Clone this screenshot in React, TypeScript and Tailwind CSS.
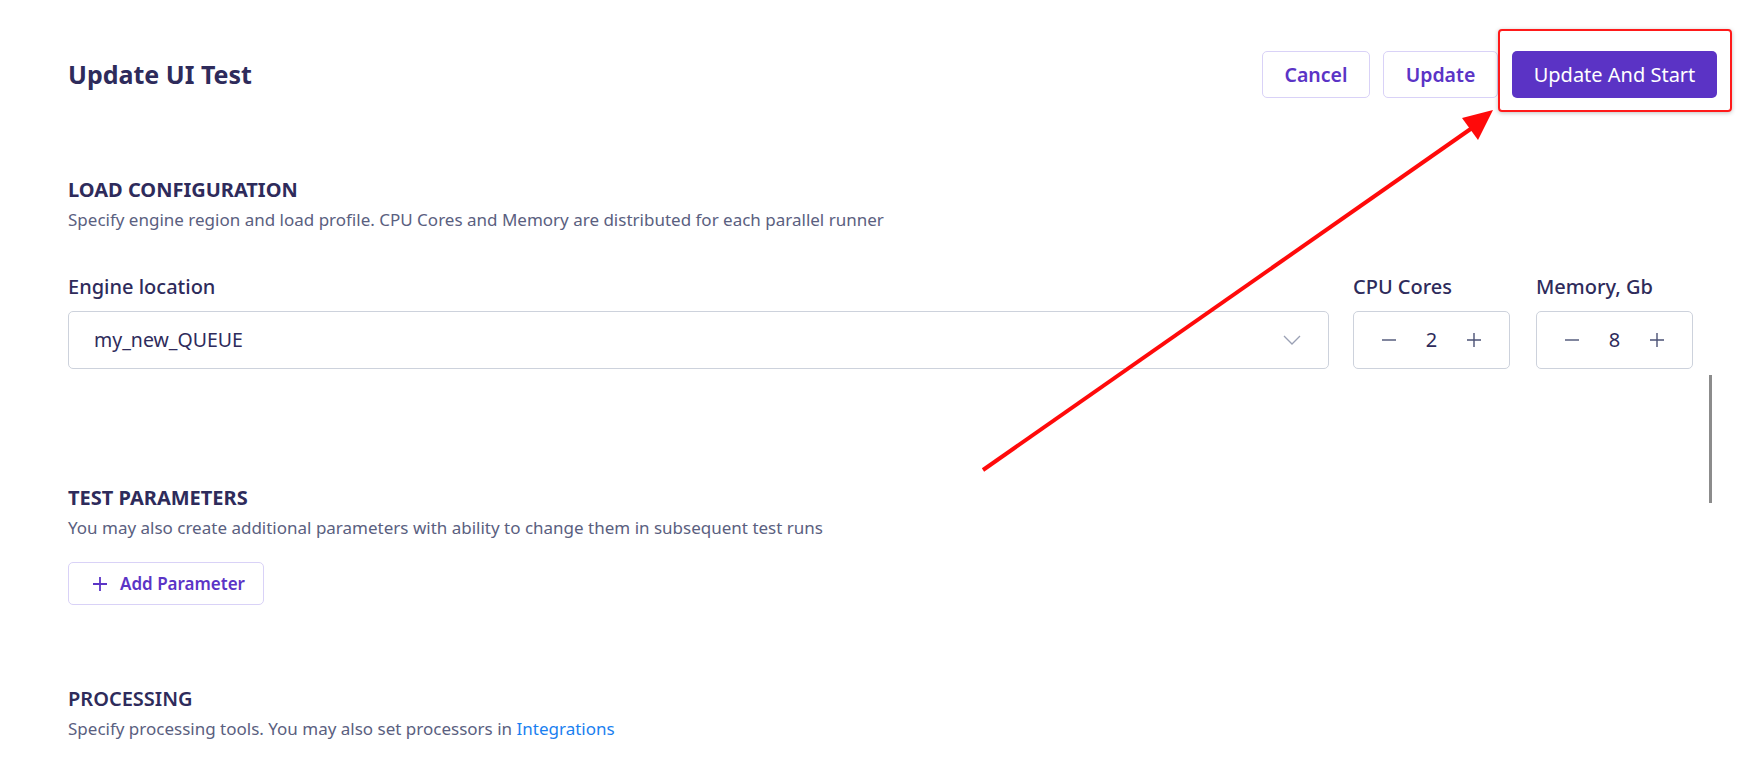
import React from 'react';

const font = { fontFamily: '"Noto Sans", "Open Sans", sans-serif' };

function Stepper({ label, value }: { label: string; value: number }) {
  return (
    <div className="flex flex-col w-[157px]">
      <span className="text-[20px] leading-[24px] font-medium text-[#2e2b5b]">{label}</span>
      <div className="mt-[12px] h-[58px] rounded-[5px] border border-[#cdd2dc] flex items-center justify-between px-[27px] text-[#4b5275]">
        <svg width="16" height="16" viewBox="0 0 16 16" fill="none" stroke="currentColor" strokeWidth="1.4">
          <path d="M1 8h14" />
        </svg>
        <span className="text-[20px] text-[#2e2b5b]">{value}</span>
        <svg width="16" height="16" viewBox="0 0 16 16" fill="none" stroke="currentColor" strokeWidth="1.4">
          <path d="M1 8h14M8 1v14" />
        </svg>
      </div>
    </div>
  );
}

function SectionHead({ title, children, bold = true }: { title: string; children: React.ReactNode; bold?: boolean }) {
  return (
    <div>
      <h2 className={`text-[20px] leading-[24px] text-[#2e2b5b] ${bold ? 'font-bold' : 'font-semibold'}`}>{title}</h2>
      <p className="mt-[7px] text-[17px] leading-[22px] text-[#5a6080]">{children}</p>
    </div>
  );
}

export default function App() {
  return (
    <div className="relative w-[1746px] h-[762px] overflow-hidden bg-white" style={font}>
      {/* header */}
      <header className="flex items-center justify-between pl-[68px] pr-[29px] pt-[51px]">
        <h1 className="text-[25px] font-bold text-[#2e2b5b]">Update UI Test</h1>
        <div className="flex items-center gap-[13px]">
          <button className="h-[47px] w-[108px] rounded-[5px] border border-[#d9d2f7] text-[19.5px] font-semibold text-[#5b34c6]">
            Cancel
          </button>
          <button className="h-[47px] w-[115px] rounded-[5px] border border-[#d9d2f7] text-[19.5px] font-semibold text-[#5b34c6]">
            Update
          </button>
          <button className="ml-[1px] h-[47px] w-[205px] rounded-[5px] bg-[#5b33c5] text-[20px] text-white">
            Update And Start
          </button>
        </div>
      </header>

      {/* content */}
      <main className="pl-[68px] pr-[53px]">
        <section className="mt-[80px]">
          <SectionHead title="LOAD CONFIGURATION">
            Specify engine region and load profile. CPU Cores and Memory are distributed for each parallel runner
          </SectionHead>
          <div className="mt-[44px] flex items-end gap-[24px]">
            <div className="flex-1 flex flex-col">
              <span className="text-[20px] leading-[24px] font-medium text-[#2e2b5b]">Engine location</span>
              <div className="mt-[12px] h-[58px] rounded-[5px] border border-[#cdd2dc] flex items-center justify-between pl-[25px] pr-[27px]">
                <span className="text-[19.5px] text-[#2e2b5b]">my_new_QUEUE</span>
                <svg width="18" height="10" viewBox="0 0 18 10" fill="none" stroke="#9aa0b4" strokeWidth="1.3">
                  <path d="M1 1l8 8 8-8" />
                </svg>
              </div>
            </div>
            <div className="flex gap-[26px]">
              <Stepper label="CPU Cores" value={2} />
              <Stepper label="Memory, Gb" value={8} />
            </div>
          </div>
        </section>

        <section className="mt-[117px]">
          <SectionHead title="TEST PARAMETERS">
            You may also create additional parameters with ability to change them in subsequent test runs
          </SectionHead>
          <button className="mt-[23px] h-[43px] w-[196px] rounded-[5px] border border-[#d9d2f7] flex items-center pl-[24px] gap-[13px] text-[17px] font-semibold text-[#5b34c6]">
            <svg width="14" height="14" viewBox="0 0 14 14" fill="none" stroke="currentColor" strokeWidth="1.8">
              <path d="M0 7h14M7 0v14" />
            </svg>
            Add Parameter
          </button>
        </section>

        <section className="mt-[82px]">
          <SectionHead title="PROCESSING" bold={false}>
            Specify processing tools. You may also set processors in{' '}
            <a className="text-[#1a7ff0]">Integrations</a>
          </SectionHead>
        </section>
      </main>

      {/* scrollbar thumb */}
      <div className="absolute left-[1709px] top-[375px] h-[128px] w-[3px] bg-[#8c8c8c]" />

      {/* annotation: highlight box */}
      <div className="absolute left-[1498px] top-[29px] w-[234px] h-[83px] rounded-[4px] border-2 border-[#ff1a1a] shadow-[0_1px_4px_rgba(0,0,0,0.25)]" />

      {/* annotation: arrow */}
      <svg className="absolute left-0 top-0 pointer-events-none" width="1746" height="762">
        <line x1="983" y1="470" x2="1472" y2="128" stroke="#ff0a0a" strokeWidth="4" />
        <polygon points="1493,110 1462,118 1478,140" fill="#ff0a0a" />
      </svg>
    </div>
  );
}
